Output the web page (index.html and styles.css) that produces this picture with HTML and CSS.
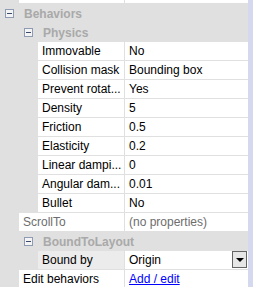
FILE: index.html
```html
<!DOCTYPE html>
<html lang="en">
<head>
    <meta charset="UTF-8">
    <title>Behaviors</title>
    <link rel="stylesheet" href="styles.css">
</head>
<body>
    <div class="grid">
        <div class="row top">
            <div class="indent lvl1"></div>
            <div class="name wide"></div>
            <div class="value"></div>
        </div>

        <div class="row header">
            <span class="toggle lvl0"></span>
            <span class="title">Behaviors</span>
        </div>
        <div class="row header">
            <span class="toggle lvl1"></span>
            <span class="title">Physics</span>
        </div>

        <div class="row">
            <div class="indent lvl2"></div>
            <div class="name">Immovable</div>
            <div class="value">No</div>
        </div>
        <div class="row">
            <div class="indent lvl2"></div>
            <div class="name">Collision mask</div>
            <div class="value">Bounding box</div>
        </div>
        <div class="row">
            <div class="indent lvl2"></div>
            <div class="name">Prevent rotat...</div>
            <div class="value">Yes</div>
        </div>
        <div class="row">
            <div class="indent lvl2"></div>
            <div class="name">Density</div>
            <div class="value">5</div>
        </div>
        <div class="row">
            <div class="indent lvl2"></div>
            <div class="name">Friction</div>
            <div class="value">0.5</div>
        </div>
        <div class="row">
            <div class="indent lvl2"></div>
            <div class="name">Elasticity</div>
            <div class="value">0.2</div>
        </div>
        <div class="row">
            <div class="indent lvl2"></div>
            <div class="name">Linear dampi...</div>
            <div class="value">0</div>
        </div>
        <div class="row">
            <div class="indent lvl2"></div>
            <div class="name">Angular dam...</div>
            <div class="value">0.01</div>
        </div>
        <div class="row">
            <div class="indent lvl2"></div>
            <div class="name">Bullet</div>
            <div class="value">No</div>
        </div>

        <div class="row">
            <div class="indent lvl1"></div>
            <div class="name wide muted">ScrollTo</div>
            <div class="value muted">(no properties)</div>
        </div>

        <div class="row header">
            <span class="toggle lvl1"></span>
            <span class="title">BoundToLayout</span>
        </div>
        <div class="row">
            <div class="indent lvl2"></div>
            <div class="name selected">Bound by</div>
            <div class="value combo">
                <span>Origin</span>
                <span class="drop"><span class="arrow"></span></span>
            </div>
        </div>

        <div class="row">
            <div class="indent lvl1"></div>
            <div class="name wide">Edit behaviors</div>
            <div class="value"><a href="#">Add / edit</a></div>
        </div>
    </div>
</body>
</html>
```

FILE: styles.css
```css
* {
    box-sizing: border-box;
}
body {
    margin: 0;
    background-color: #d5d9ef;
    font-family: "Liberation Sans", Arial, sans-serif;
    font-size: 12px;
    color: #000;
    overflow: hidden;
}
.grid {
    width: 248px;
    background-color: #e0e0e0;
}
.row {
    display: flex;
    height: 19px;
    line-height: 18px;
    white-space: nowrap;
}
.row.top {
    height: 4px;
}
.indent.lvl1 {
    width: 19px;
    flex: none;
}
.indent.lvl2 {
    width: 38px;
    flex: none;
}
.name {
    width: 87px;
    flex: none;
    padding-left: 4px;
    background-color: #fff;
    border-right: 1px solid #e0e0e0;
    border-bottom: 1px solid #e0e0e0;
    overflow: hidden;
}
.name.wide {
    width: 106px;
}
.name.selected {
    background-color: #ececec;
}
.value {
    flex: 1;
    padding-left: 4px;
    background-color: #fff;
    border-bottom: 1px solid #e0e0e0;
    overflow: hidden;
}
.muted {
    color: #6d6d6d;
}
.header {
    align-items: center;
    font-weight: bold;
    color: #a9a9a9;
}
.toggle {
    width: 9px;
    height: 9px;
    border: 1px solid #8f9bb3;
    background-color: #f4f4f4;
    position: relative;
    flex: none;
}
.toggle::after {
    content: "";
    position: absolute;
    left: 1px;
    top: 3px;
    width: 5px;
    height: 1px;
    background-color: #3c4a6b;
}
.toggle.lvl0 {
    margin: 0 10px 0 5px;
}
.toggle.lvl1 {
    margin: 0 10px 0 24px;
}
.combo {
    display: flex;
    justify-content: space-between;
    padding-right: 1px;
}
.drop {
    width: 15px;
    height: 17px;
    border: 1px solid #646464;
    background-color: #e6e6e6;
    display: flex;
    align-items: center;
    justify-content: center;
}
.arrow {
    width: 0;
    height: 0;
    border-left: 4px solid transparent;
    border-right: 4px solid transparent;
    border-top: 4px solid #000;
}
a {
    color: #0000ff;
    text-decoration: underline;
}
```
